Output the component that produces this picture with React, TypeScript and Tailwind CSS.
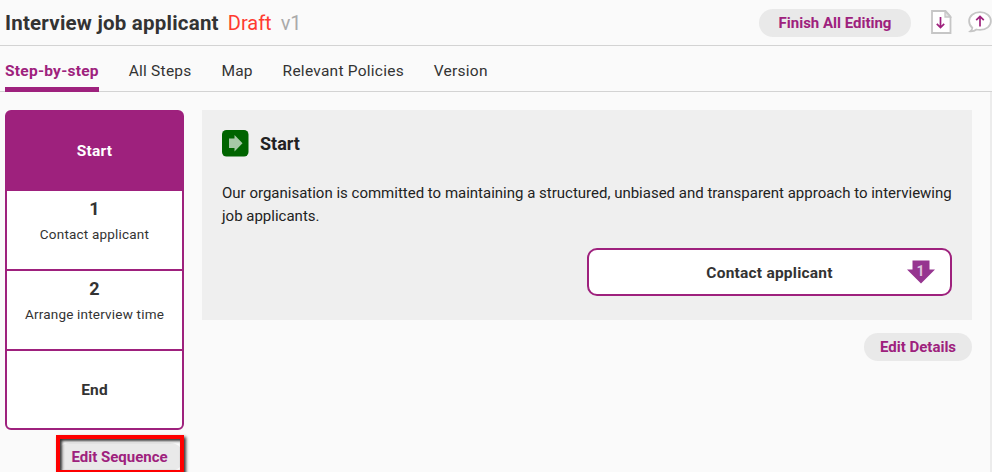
import clsx from "clsx";

type Step = {
  title: string;
  number?: number;
  active?: boolean;
};

const tabs = ["Step-by-step", "All Steps", "Map", "Relevant Policies", "Version"];

const steps: Step[] = [
  { title: "Start", active: true },
  { title: "Contact applicant", number: 1 },
  { title: "Arrange interview time", number: 2 },
  { title: "End" },
];

function PillButton(props: { children: string; className?: string }) {
  return (
    <button
      className={clsx(
        "flex h-7 items-center justify-center rounded-full bg-[#e9e9e9] text-[15px] font-bold whitespace-nowrap text-[#9e217d]",
        props.className
      )}
    >
      {props.children}
    </button>
  );
}

function DownloadIcon() {
  return (
    <svg width="21" height="24" viewBox="0 0 21 24" fill="none">
      <path d="M1 1h13.5L19.5 6.5V23H1Z" fill="#fff" stroke="#c6c6c6" strokeWidth="1.8" />
      <path d="M14 1v6h5.5Z" fill="#e4e4e4" stroke="#c6c6c6" strokeWidth="1.3" />
      <path d="M9.5 7v10.5M5.8 13.8l3.7 3.7 3.7-3.7" stroke="#9e217d" strokeWidth="1.7" />
    </svg>
  );
}

function CommentIcon() {
  return (
    <svg width="24" height="22" viewBox="0 0 24 22" fill="none">
      <path
        d="M12 1.2C5.7 1.2 1.1 5 1.1 10c0 2.9 1.3 5.2 3.2 6.7-.1 1.5-.8 2.7-1.9 3.6 2.5.1 4.4-.4 6-1.8 1.1.3 2.3.4 3.6.4 6.3 0 10.9-3.9 10.9-8.9S18.3 1.2 12 1.2Z"
        fill="#fff"
        stroke="#c6c6c6"
        strokeWidth="1.8"
      />
      <path d="M12 15.5V5.5M8.2 9.2 12 5.4l3.8 3.8" stroke="#9e217d" strokeWidth="1.7" />
    </svg>
  );
}

function StartIcon() {
  return (
    <svg width="27" height="27" viewBox="0 0 27 27">
      <rect width="26.5" height="26.5" rx="4.5" fill="#006400" />
      <path d="M7 8.5h5.5V5l8 8.3-8 8.3V18H7Z" fill="#a6c8a6" />
    </svg>
  );
}

function NextStepIcon() {
  return (
    <svg width="28" height="24" viewBox="0 0 28 24">
      <path d="M5.5.5h17v9H28L14 23.5 0 9.5h5.5Z" fill="#963590" />
      <text
        x="13.5"
        y="15.5"
        textAnchor="middle"
        fill="#dcc3dc"
        className="text-[14px] font-bold"
      >
        1
      </text>
    </svg>
  );
}

function StepCell({ step }: { step: Step }) {
  return (
    <li
      className={clsx(
        "flex flex-col items-center border-b-2 border-[#9e217d] last:border-b-0",
        step.number ? "h-20 pt-[5px]" : "h-[79px] justify-center last:h-[77px]",
        step.active ? "bg-[#9e217d] text-white" : "bg-white"
      )}
    >
      {step.number ? (
        <>
          <span className="text-[18px] leading-[26px] font-bold">{step.number}</span>
          <span className="text-[13.5px] leading-6 tracking-[0.2px]">{step.title}</span>
        </>
      ) : (
        <span className="text-[15.5px] leading-5 font-bold tracking-[0.2px]">{step.title}</span>
      )}
    </li>
  );
}

export default function App() {
  return (
    <div className="flex h-[472px] w-[992px] flex-col overflow-hidden bg-[#fafafa] font-['Roboto',sans-serif] text-[#333]">
      <header className="flex h-[46px] shrink-0 items-center border-b border-[#d3d3d3] pl-[5px]">
        <h1 className="pt-0.5 text-[20.5px] font-bold tracking-[0.22px]">Interview job applicant</h1>
        <span className="ml-[9px] text-[20px] text-[#ff3b30]">Draft</span>
        <span className="ml-[9px] text-[20px] text-[#aaa]">v1</span>
        <PillButton className="ml-auto w-[152px] pt-0.5">Finish All Editing</PillButton>
        <button className="ml-5 -translate-y-px">
          <DownloadIcon />
        </button>
        <button className="ml-4 -translate-y-px">
          <CommentIcon />
        </button>
      </header>
      <nav className="flex h-[46px] shrink-0 gap-[29.8px] border-b border-[#d3d3d3] pl-[5px]">
        {tabs.map((tab, i) => (
          <a
            key={tab}
            className={clsx(
              "h-[46px] pt-[13px] text-[15.5px] leading-6 tracking-[0.25px]",
              i === 0 && "border-b-[5px] border-[#9e217d] font-bold text-[#9e217d]"
            )}
          >
            {tab}
          </a>
        ))}
      </nav>
      <div className="flex flex-1 border-r-2 border-[#ececec] pt-[18px] pl-[5px]">
        <aside className="flex w-[179px] flex-col items-end">
          <ol className="w-full overflow-hidden rounded-md border-2 border-[#9e217d] bg-[#9e217d]">
            {steps.map((step) => (
              <StepCell key={step.title} step={step} />
            ))}
          </ol>
          <div className="relative mt-[13px]">
            <PillButton className="w-32 pr-px">Edit Sequence</PillButton>
            {/* highlight frame around the button */}
            <div className="pointer-events-none absolute -top-2 left-0 h-[39px] w-32 border-4 border-[#fe0000] shadow-[2px_2px_3px_#333,inset_2px_2px_3px_#333]" />
          </div>
        </aside>
        <main className="ml-[18px] flex w-[770px] flex-col items-end">
          <section className="flex h-[210px] w-full flex-col bg-[#efefef] px-5 pt-5">
            <div className="flex items-center gap-[11px]">
              <StartIcon />
              <h2 className="text-[18px] font-bold text-[#222]">Start</h2>
            </div>
            <p className="mt-[25px] text-[15px] leading-[23px] text-[#222]">
              Our organisation is committed to maintaining a structured, unbiased and transparent
              approach to interviewing job applicants.
            </p>
            <button className="mt-5 grid h-12 w-[365px] grid-cols-[1fr_auto_1fr] items-center self-end rounded-[10px] border-2 border-[#9e217d] bg-white px-[15px] text-[15.5px] font-bold">
              <span className="col-start-2 pt-[3px] tracking-[0.22px]">Contact applicant</span>
              <span className="justify-self-end">
                <NextStepIcon />
              </span>
            </button>
          </section>
          <PillButton className="mt-[13px] w-[108px]">Edit Details</PillButton>
        </main>
      </div>
    </div>
  );
}
